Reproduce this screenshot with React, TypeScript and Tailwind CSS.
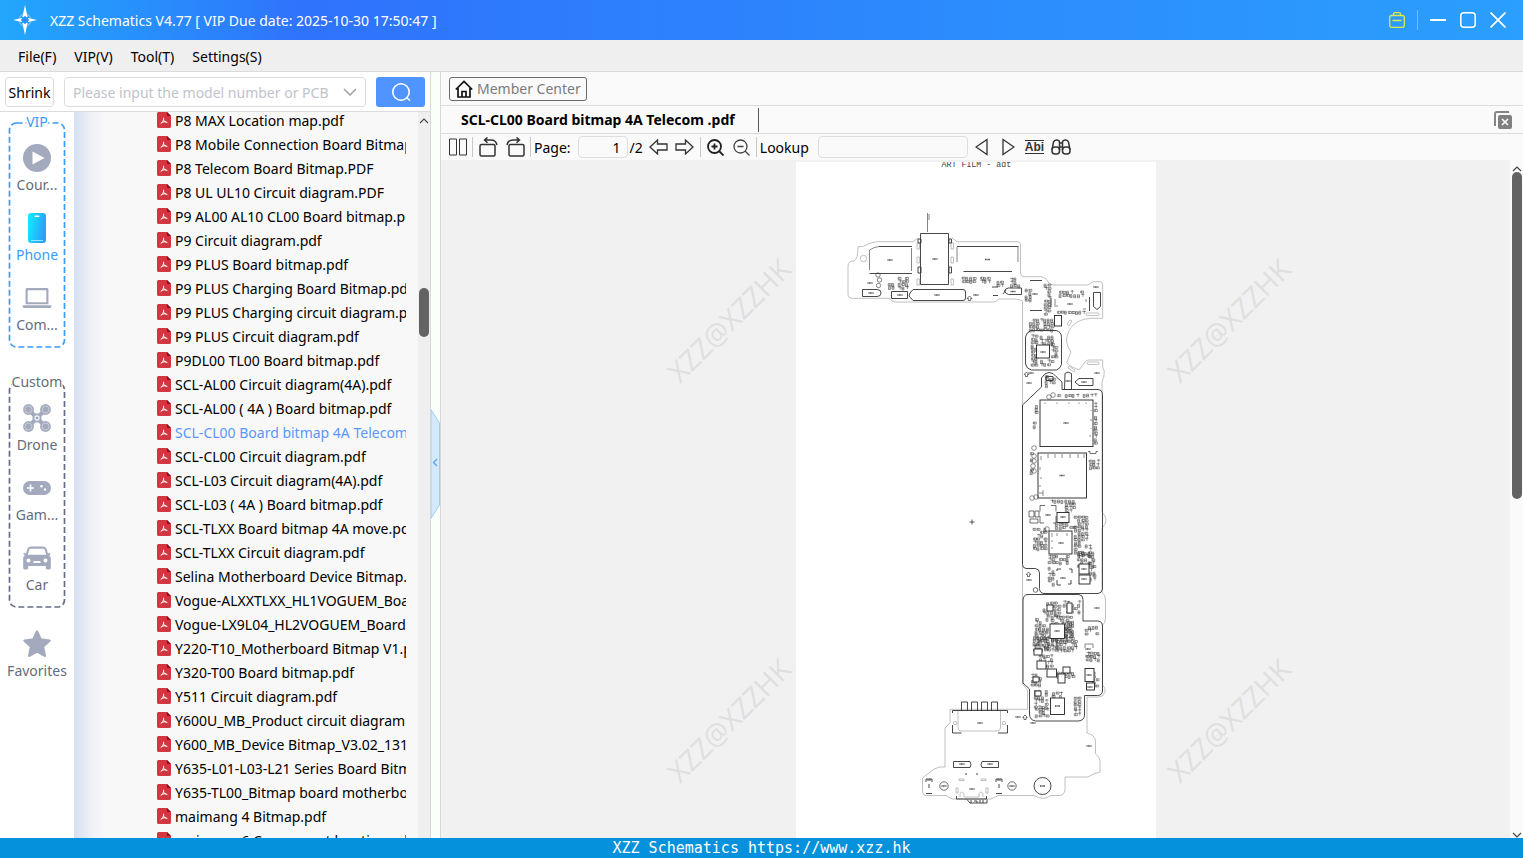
import { useState } from 'react';
import type { ReactNode } from 'react';

const FILES = [
  'P8 MAX Location map.pdf',
  'P8 Mobile Connection Board Bitmap.pdf',
  'P8 Telecom Board Bitmap.PDF',
  'P8 UL UL10 Circuit diagram.PDF',
  'P9 AL00 AL10 CL00 Board bitmap.pdf',
  'P9 Circuit diagram.pdf',
  'P9 PLUS Board bitmap.pdf',
  'P9 PLUS Charging Board Bitmap.pdf',
  'P9 PLUS Charging circuit diagram.pdf',
  'P9 PLUS Circuit diagram.pdf',
  'P9DL00 TL00 Board bitmap.pdf',
  'SCL-AL00 Circuit diagram(4A).pdf',
  'SCL-AL00 ( 4A ) Board bitmap.pdf',
  'SCL-CL00 Board bitmap 4A Telecom .pdf',
  'SCL-CL00 Circuit diagram.pdf',
  'SCL-L03 Circuit diagram(4A).pdf',
  'SCL-L03 ( 4A ) Board bitmap.pdf',
  'SCL-TLXX Board bitmap 4A move.pdf',
  'SCL-TLXX Circuit diagram.pdf',
  'Selina Motherboard Device Bitmap.pdf',
  'Vogue-ALXXTLXX_HL1VOGUEM_Board.pdf',
  'Vogue-LX9L04_HL2VOGUEM_Board.pdf',
  'Y220-T10_Motherboard Bitmap V1.pdf',
  'Y320-T00 Board bitmap.pdf',
  'Y511 Circuit diagram.pdf',
  'Y600U_MB_Product circuit diagram.pdf',
  'Y600_MB_Device Bitmap_V3.02_131.pdf',
  'Y635-L01-L03-L21 Series Board Bitmap.pdf',
  'Y635-TL00_Bitmap board motherboard.pdf',
  'maimang 4 Bitmap.pdf',
  'maimang 6 Component location.pdf',
];

const MENUS = ['File(F)', 'VIP(V)', 'Tool(T)', 'Settings(S)'];

function PdfIcon() {
  return (
    <svg width="14" height="16" viewBox="0 0 14 16" className="shrink-0">
      <path d="M1.500 0H10l4 4v10.500a1.500 1.500 0 0 1-1.500 1.500h-11A1.500 1.500 0 0 1 0 14.500v-13A1.500 1.500 0 0 1 1.500 0Z" fill="#d2363f" />
      <path d="M10 0v4h4Z" fill="#8c1219" />
      <path d="M6.600 6.200c.2 1.800-.6 3.800-2.600 5.200M6.600 7.500c.4 1.500 1.500 2.700 3.400 3M4.800 10.500c1.300-.8 2.900-1 4.200-.6" fill="none" stroke="#fff" strokeLinecap="round" />
    </svg>
  );
}

function CourseIcon() {
  return (
    <svg width="28" height="28" viewBox="0 0 28 28">
      <circle cx="14" cy="14" r="14" fill="#a3aabd" />
      <path d="M9.500 7.500v13l12-6.500Z" fill="#fff" />
    </svg>
  );
}

function PhoneIcon() {
  return (
    <svg width="18" height="30" viewBox="0 0 18 30">
      <defs>
        <linearGradient id="phone" x1="0" y1="0" x2="1" y2="0.3">
          <stop offset="0" stopColor="#0ff0fd" />
          <stop offset="1" stopColor="#2ba0fb" />
        </linearGradient>
      </defs>
      <rect width="18" height="30" rx="3" fill="url(#phone)" />
      <rect x="6.500" y="2.500" width="5" height="1.500" rx=".7" fill="#fff" />
      <path d="M3 27.500h12" stroke="#9be6fd" />
    </svg>
  );
}

function LaptopIcon() {
  return (
    <svg width="30" height="20" viewBox="0 0 30 21" fill="#a3aabd">
      <path fillRule="evenodd" d="M4.500 0h21A1.500 1.500 0 0 1 27 1.500V17H3V1.500A1.500 1.500 0 0 1 4.500 0ZM5.200 2.400V15h19.600V2.400Z" />
      <path d="M0 18h30v1.500a1.500 1.500 0 0 1-1.500 1.500h-27A1.500 1.500 0 0 1 0 19.500Z" />
    </svg>
  );
}

function DroneIcon() {
  return (
    <svg width="28" height="28" viewBox="0 0 28 28">
      <path d="M5.500 5.500 14 14l8.500-8.500M5.500 22.500 14 14l8.500 8.500" stroke="#a3aabd" strokeWidth="4" fill="none" />
      {[[5.5, 5.5], [22.5, 5.5], [5.5, 22.5], [22.5, 22.5]].map(([x, y]) => (
        <g key={`${x}-${y}`}>
          <circle cx={x} cy={y} r="5.400" fill="#a3aabd" />
          <circle cx={x} cy={y} r="3.500" fill="none" stroke="#d2d6df" strokeWidth=".8" />
        </g>
      ))}
      <circle cx="14" cy="14" r="4.600" fill="#a3aabd" />
      <circle cx="14" cy="14" r="2.100" fill="none" stroke="#fff" strokeWidth="1.100" />
    </svg>
  );
}

function GameIcon() {
  return (
    <svg width="28" height="14" viewBox="0 0 28 14">
      <rect width="28" height="14" rx="7" fill="#a3aabd" />
      <path d="M7.500 3.500v7M4 7h7" stroke="#fff" strokeWidth="1.600" />
      <circle cx="18.500" cy="5.200" r="1.200" fill="#fff" />
      <circle cx="22" cy="8.500" r="1.200" fill="#fff" />
    </svg>
  );
}

function CarIcon() {
  return (
    <svg width="28" height="24" viewBox="0 0 28 24">
      <path
        fillRule="evenodd"
        fill="#a3aabd"
        d="M8 .5h12c1.800 0 3 .9 3.600 2.500L25 7.500l1.700-.5c.9-.2 1.300 1 .5 1.500l-1 .7c1.100.8 1.600 1.800 1.600 3.300v9.200c0 1-.8 1.800-1.800 1.800h-1.400c-1 0-1.800-.8-1.800-1.800V20H5.200v1.700c0 1-.8 1.800-1.800 1.800H2C1 23.500.2 22.700.2 21.700v-9.200c0-1.500.5-2.500 1.600-3.300l-1-.7C0 8 .4 6.800 1.300 7L3 7.500 4.400 3C5 1.400 6.200.5 8 .5ZM7.800 2.700c-.8 0-1.200.3-1.500 1.100L4.800 8.700h18.400l-1.500-4.900c-.3-.8-.7-1.100-1.500-1.100ZM5.500 12.500a2 2 0 1 0 0 4 2 2 0 0 0 0-4Zm17 0a2 2 0 1 0 0 4 2 2 0 0 0 0-4ZM10.500 15v2h7v-2Z"
      />
    </svg>
  );
}

function StarIcon() {
  return (
    <svg width="28" height="28" viewBox="0 0 28 28">
      <path
        d="m14 1.500 3.700 8 8.800 1.100-6.500 6 1.800 9.200L14 21.500l-7.800 4.300L8 16.600l-6.500-6 8.800-1.100Z"
        fill="#a3aabd"
        stroke="#a3aabd"
        strokeWidth="2.400"
        strokeLinejoin="round"
      />
    </svg>
  );
}

interface SideItemProps {
  icon: ReactNode;
  label: string;
  active?: boolean;
}

function SideItem({ icon, label, active }: SideItemProps) {
  return (
    <button className="flex h-[70px] w-full flex-col items-center gap-px pt-2">
      <span className="flex h-7 items-center justify-center">{icon}</span>
      <span className={`text-[14px] leading-6 ${active ? 'text-[#3a9bfa]' : 'text-[#666c7b]'}`}>{label}</span>
    </button>
  );
}

interface GroupProps {
  title: string;
  color: string;
  textClass: string;
  children: ReactNode;
}

function SideGroup({ title, color, textClass, children }: GroupProps) {
  return (
    <section className="relative mx-auto w-14 pt-3.5">
      <svg className="absolute inset-0 h-full w-full overflow-visible" fill="none">
        <rect x=".5" y="1" width="55" height="224" rx="7" stroke={color} strokeWidth="1.700" strokeDasharray="6 3" />
      </svg>
      <h2 className={`absolute -top-2.5 left-1/2 -translate-x-1/2 bg-white text-[14px] leading-5 ${textClass}`}>{title}</h2>
      <div className="relative">{children}</div>
    </section>
  );
}

// x, y, width, height, seed
const CLUSTERS: number[][] = [
  [887, 283, 7, 7, 1], [897, 277, 9, 13, 51], [961, 277, 14, 5, 2], [979, 277, 10, 6, 3], [992, 281, 9, 6, 4],
  [1009, 278, 10, 9, 5], [1024, 289, 5, 12, 6], [1043, 284, 5, 30, 7], [1058, 291, 26, 7, 8],
  [1056, 311, 28, 3, 9], [1028, 319, 26, 12, 10], [1030, 335, 8, 30, 11], [1039, 336, 15, 8, 12],
  [1039, 360, 15, 5, 13], [1050, 343, 6, 16, 14], [1044, 375, 11, 12, 15], [1053, 394, 42, 4, 16],
  [1093, 403, 4, 10, 17], [1093, 416, 4, 29, 18], [1034, 405, 3, 10, 19], [1032, 422, 3, 9, 20],
  [1088, 460, 9, 10, 21], [1029, 446, 3, 30, 22], [1049, 500, 26, 3, 23], [1064, 503, 11, 8, 24],
  [1054, 523, 20, 6, 25], [1073, 516, 15, 14, 26], [1032, 528, 13, 22, 27], [1073, 532, 17, 24, 28],
  [1047, 555, 22, 9, 29], [1076, 552, 18, 14, 30], [1047, 567, 7, 18, 31], [1088, 562, 7, 20, 32],
  [1034, 618, 14, 30, 33], [1042, 602, 18, 14, 34], [1062, 601, 16, 12, 35], [1050, 616, 22, 24, 36],
  [1032, 636, 26, 16, 37], [1055, 640, 20, 12, 38], [1038, 655, 14, 12, 39], [1063, 621, 11, 20, 40],
  [1030, 674, 10, 13, 41], [1033, 690, 12, 20, 42], [1051, 692, 11, 6, 43], [1034, 708, 13, 9, 44],
  [1073, 697, 6, 18, 45], [1080, 626, 16, 9, 46], [1085, 652, 12, 9, 47], [1056, 672, 16, 7, 48],
  [1091, 672, 6, 14, 50],
];

function clusterPath([x, y, w, h, seed]: number[]) {
  let s = seed * 9301 + 49297;
  const rnd = () => {
    s = (s * 9301 + 49297) % 233280;
    return s / 233280;
  };
  let d = '';
  for (let cy = y; cy < y + h - 1; cy += 3.2) {
    for (let cx = x; cx < x + w - 1; cx += 3.6) {
      const r = rnd();
      if (r < 0.2) continue;
      const px = cx + rnd() * 0.6;
      const py = cy + rnd() * 0.6;
      d += r < 0.55
        ? `M${px} ${py}h3v2h-3zM${px + 1} ${py}v2`
        : r < 0.85
          ? `M${px} ${py}v3h2v-3zM${px} ${py + 1.5}h2`
          : `M${px} ${py}h3.500M${px + 2} ${py - 1}v3.500`;
    }
  }
  return d;
}

// x, y, width, height of the larger chips
const CHIPS = [
  [1039, 400, 53, 46.500], [1037, 453, 48.500, 45], [1048, 531, 23, 23], [1035.5, 345, 13, 13],
  [1049, 624, 14.500, 14.500], [1049.5, 698, 14, 16.500], [1084, 668.500, 9, 13], [1085.5, 683, 8, 7],
  [1033, 649, 8, 6], [1036, 661, 9, 8], [1046, 669, 9.500, 8], [1062, 667, 7, 6], [1057, 674, 7, 9],
  [1056, 512.500, 12, 10], [1078, 564, 10, 10], [1078, 575, 11, 9], [1053.5, 315.500, 7, 10.500],
  [1046, 605, 6, 6], [1066, 603, 5, 10], [1034, 691, 6, 5], [1032, 677, 6, 5],
];

const LABELS = [
  [889, 260], [934, 259], [986.5, 259.500], [936, 295], [870, 293], [899, 295], [1012, 291.500],
  [1034, 294], [1069, 304], [1095, 287], [975, 295], [869, 283], [1042, 352], [1030, 373], [1028, 383],
  [1067, 381], [1083, 382], [1096, 373], [1065, 423], [1061, 475.500], [1047, 515], [1062, 517],
  [1060, 543], [1062, 578], [1083, 569], [1083, 579], [1096, 608], [1056, 631], [1056.500, 706],
  [1088, 675], [1089, 687], [1087, 649], [1017, 717], [1032, 723], [1088, 746], [979, 723],
  [961, 764], [989, 764], [971, 789], [943, 786], [1011, 786], [1041.5, 786], [1028, 580],
];

function BoardDrawing() {
  return (
    <svg viewBox="795 162 360 676" className="block w-full" fill="none">
      <text x="940.500" y="167" fontFamily="Liberation Mono" fontSize="8.300" fill="#444">ART FILM - adt</text>
      {/* board outline */}
      <g stroke="#b0b0b0" strokeWidth=".8">
        <path d="M951 238L956 241.700H1017Q1019.500 242 1019.500 245V273Q1020 276.700 1023 276.700H1041Q1046 278 1047 282Q1049 285 1053 285H1087L1092 281.700H1099Q1101.700 282 1101.700 285V318.300H1090Q1067 320 1065.500 341Q1066 346 1070 352L1065.500 363Q1070 367 1078 370L1084 362Q1085 360 1088 360H1101.700V367Q1104 370 1103 376L1101 382V512Q1105 516 1105 520Q1105 525 1101 528V592Q1104.500 595 1104.500 600V618Q1104 624 1101.500 625V685Q1105 688 1104 692Q1102 697 1098 697H1086V733Q1094 735 1094.500 741V754Q1099 757 1099 761V772Q1093 773 1087 777H1064V790Q1063 795.500 1058 795.500H1050Q1042 801 1033 795.500H997L990 799H951L945 795.500H924Q921.500 795 921.500 791V778L933 769Q939 766 944 767V728L949 723V709.300H1026.500V690L1021.500 684V301Q1018 299 1014 299H998Q995 302 992 302H895Q890 302 889 298.300H851Q847 298 847 295V266Q847 261 853 261Q857 259 857 247Q863 247 867 244Q872 242 877 241.700H912L917 238" />
        <circle cx="862.500" cy="258.500" r="3.200" />
        <path d="M916 243h2.500v6h-2.500zM916 257h2.500v6h-2.500zM916 279h2.500v6h-2.500zM950 243h2.500v6h-2.500zM950 257h2.500v6h-2.500zM950 279h2.500v6h-2.500z" />
        <rect x="1085" y="313" width="13" height="2.500" rx="1.200" />
        <rect x="1086" y="362" width="12" height="2.500" rx="1.200" />
        <path d="m1066 324 3-4 2 1-3 5zM1068 366l6 4-1 2-6-4z" />
        <path d="M957 711V728Q957 731 960 731H996Q999 731 999.500 728V711M958 779h5v1.500h-5zM980 779h5v1.500h-5zM955 788h2v5h-2zM985 788h2v5h-2zM959 797v-3q1.500-4 4 0v3h15v-3q2-4 4 0v3" />
        <circle cx="954" cy="723" r="1.700" />
        <circle cx="1003" cy="723" r="1.700" />
      </g>
      {/* small parts */}
      <g stroke="#333" strokeWidth=".5">
        {CLUSTERS.map((c) => (
          <path key={c[4]} d={clusterPath(c)} />
        ))}
      </g>
      {/* shields and connectors */}
      <g stroke="#333" strokeWidth=".9">
        <path d="M926.500 213v19M928 214v6M868.500 270V250Q873 247 878 246.500M910.500 248v23M956 247v15M1017 247v15" strokeWidth=".6" />
        <path d="M878 246.500H911M868.500 273.500H911M956 246.500H1017.500M962.500 271.500H1011" />
        <path d="M919.500 233.500h28v51h-28zM917 239h3v4h-3zM948 239h2.500v4H948zM917 267h3v6h-3zM948 267h2.500v6H948z" />
        <path d="M861.500 289.500H876q4 0 4 3.500t-4 3.500H861.500ZM890.500 291.500h16v7h-16zM912 289.500h50q2.500 0 2.500 2.500v6q0 2.500-2.500 2.500h-50l-4-4.500 1-3ZM1020.500 288v6.500h-13q-3-1-4-3.500 1-3 4-3Z" />
        <circle cx="877" cy="275" r="2.200" strokeWidth=".6" />
        <circle cx="878.500" cy="280" r="2.200" strokeWidth=".6" />
        <circle cx="877.500" cy="285.500" r="2.200" strokeWidth=".6" />
        <path d="m968.500 296 2.500 2.500h-1.300v2h-2.400v-2H966ZM1025.500 372l2.300 2.500h-1.200v2h-2.200v-2h-1.200ZM1027.500 572l2.300 2.500h-1.200v2h-2.200v-2h-1.200ZM1024 715l2.300 2.500h-1.200v2h-2.200v-2h-1.200Z" strokeWidth=".7" />
        <path d="M991 287h6M992 295.500h5M1002 294l3-4M1029 280.500h12M1029 310.500h12M1088.500 297v14M1050 298v9" />
        <path d="M1092.500 292.500h7v14l-3.500 3-3.500-3Z" />
        <path d="M1054 299v8M1085 299v3M1055 306h2M1082 309h3" strokeWidth=".6" />
        <path d="M1030 330.500h25q5.500 1 5.500 7v27q-1 4-5 5.500h-25q-5-1-6-6v-27q1-5 5.500-6.500Z" />
        <path d="M1040.500 378q3-5.500 7.500-5.500t7 4L1061 382v7.500h36q4.500.5 4.500 5V589q-.5 4-4.500 4.500H1043q-4.500-.5-4.500-5V573q0-4-4-4.500H1025q-3.500-.5-3.500-4V405L1040.500 387Z" />
        <path d="M1064 373.500l3-1.500 3.500 1.500v16h-7zM1074 382l4-3.500h14v7h-14Z" />
        <path d="M1045 376.500h7v4h-7z" />
        <path d="M1026 594.500h52q4 .5 4 5V621h15q4.500.5 4.500 5v65q-.5 4.500-5 4.500h-13v20q-.5 5-6 5.500h-43q-6-1-6-7v-25l-6.500-6V600q.5-5 4-5.500Z" />
        <circle cx="1034.500" cy="590" r="2.300" strokeWidth=".7" />
        <path d="M1044 505.500h-5v6M1050 505.500h5v6M1039 516v7h4M1055 516v7h-3M1028 511h5v6h-5zM1034 511h4v6h-4zM1029 519h8v4h-8z" strokeWidth=".7" />
        <path d="M1056 571v-2h4M1068 569h3v4M1056 580v5h4M1067 584h3v-4" />
        <path d="M1084 644h8M1084 644v4M1092 644v4M1084 656h8" strokeWidth=".6" />
        <path d="M1087 451.500h2v2h6v-2h2" strokeWidth=".7" />
      </g>
      {/* chips */}
      <g stroke="#222" strokeWidth=".9" fill="#fff">
        {CHIPS.map(([x, y, w, h]) => (
          <rect key={`${x}-${y}`} x={x} y={y} width={w} height={h} />
        ))}
      </g>
      <g stroke="#444" strokeWidth=".6">
        {[[1033, 448], [1033, 456], [1033, 461], [1032, 466], [1033, 471], [1031, 498], [1035, 497], [1048, 397], [1052, 395], [1046, 529]].map(([x, y]) => (
          <circle key={`${x}-${y}`} cx={x} cy={y} r="2.300" />
        ))}
        <path d="M1044 402.500v1.500M1056 402.500v1.500M1068 402.500v1.500M1078 402.500v1.500M1085 402.500v1.500M1090 410v1M1090 419v2M1090 428v1M1088 436h2M1047 454v4M1054 454v4M1061 454v4M1069 454v4M1077 454v4M1083 454v4M1040 456v4M1039 467v3M1040 477v2M1039 485v2M1042 490v6M1038 493h4M1051 533v4M1056 533v3M1066 533v3M1050 541h2M1050 548h2" />
      </g>
      <path d={LABELS.map(([x, y]) => `M${x - 2.5} ${y}h5`).join('')} stroke="#444" strokeWidth="1.300" strokeDasharray="1 .4" />
      {/* charging port side */}
      <g stroke="#333" strokeWidth=".9">
        <path d="M960.500 711v-9h6v9M970.500 711v-9h6v9M980.500 711v-9h6v9M990.500 711v-9h6v9M951.500 713v-2.500h55V713M951.500 725v8h9M1006.500 725v8h-9.500" />
        <path d="M952.500 761.500H969l1 3-1 3H952.500ZM981 761.500h16.500v6H981l-1-3Z" />
        <path d="M925 782v-3h6v3M926 780h4M925 793.500h6M995 782v-3h6v3M996 780h4M995 793.500h6M928 784v4M998 784v4" />
        <circle cx="943" cy="786" r="4.200" strokeWidth=".7" />
        <circle cx="1011" cy="786" r="4.200" strokeWidth=".7" />
        <circle cx="1041.500" cy="786" r="8.500" />
        <path d="M955.500 796v3h30v-3M966 799.500l3 3.500h17v-3.500M970 800v3M973 801h3v2M979 800v3M982 800v3M965 773v2M976 773v2" />
        <path d="M968.500 522h5M971 519.500v5" strokeWidth=".8" />
      </g>
    </svg>
  );
}

function Watermarks() {
  return (
    <div className="mx-[3px] flex flex-col gap-[272px]">
      {[0, 1].map((n) => (
        <div key={n} className="flex h-32 w-32 items-center justify-center">
          <span className="-rotate-45 font-['Open_Sans',sans-serif] text-[28px] leading-8 text-[#dfdfdf]">XZZ@XZZHK</span>
        </div>
      ))}
    </div>
  );
}

function Divider() {
  return <span className="h-5 w-px bg-[#c8c8c8]" />;
}

export default function App() {
  const [selected, setSelected] = useState('SCL-CL00 Board bitmap 4A Telecom .pdf');

  return (
    <div className="flex h-screen flex-col overflow-hidden bg-white font-['Noto_Sans','Noto_Sans_CJK_SC',sans-serif] text-[14px] text-black">
      <header className="flex h-10 shrink-0 items-center bg-linear-to-r from-[#22a7fb] via-[#2f72fc] via-20% to-[#2b9ffd] pr-[17px] pl-3 text-white">
        <svg width="26" height="30" viewBox="0 0 26 30" className="mr-3">
          <circle cx="13" cy="15" r="6" fill="none" stroke="#7bb8fd" strokeWidth="1.200" />
          <path d="m13 0 2.600 12H10.400ZM13 30l-2.600-12h5.200ZM1 15l9-2v4ZM25 15l-9-2v4Z" fill="#fff" />
          <path d="M13 11v8M9 15h8" stroke="#2f88fc" strokeWidth="1.400" />
        </svg>
        <h1>XZZ Schematics V4.77 [ VIP Due date: 2025-10-30 17:50:47 ]</h1>
        <div className="ml-auto flex items-center gap-3">
          <button aria-label="Toolbox">
            <svg width="16" height="16" viewBox="0 0 16 16" fill="none" stroke="#dfe84e" strokeWidth="1.300">
              <rect x=".7" y="3.500" width="14.600" height="11.800" rx="2" />
              <path d="M4.500 3.500V2Q4.500.7 6 .7h4Q11.500.7 11.500 2v1.500M3.500 8.500h9" />
            </svg>
          </button>
          <span className="h-5 w-px bg-[#6fbcfe]" />
          <button aria-label="Minimize">
            <svg width="16" height="16" viewBox="0 0 16 16"><path d="M0 8h16" stroke="#fff" strokeWidth="2" /></svg>
          </button>
          <button aria-label="Maximize" className="mx-0.5">
            <svg width="16" height="16" viewBox="0 0 16 16"><rect x=".8" y=".8" width="14.400" height="14.400" rx="3" fill="none" stroke="#fff" strokeWidth="1.500" /></svg>
          </button>
          <button aria-label="Close">
            <svg width="16" height="16" viewBox="0 0 16 16"><path d="m.5.5 15 15M15.500.5l-15 15" stroke="#fff" strokeWidth="1.700" /></svg>
          </button>
        </div>
      </header>

      <nav className="flex h-8 shrink-0 items-center gap-[18px] border-b border-[#dadada] bg-[#efefef] px-[18px] pt-0.5">
        {MENUS.map((m) => (
          <button key={m}>{m}</button>
        ))}
      </nav>

      <div className="flex min-h-0 flex-1">
        <div className="flex w-[431px] shrink-0 flex-col border-r border-[#d8d8d8]">
          <div className="flex h-10 shrink-0 items-center border-b border-[#dcdcdc] px-[5px]">
            <button className="h-[30px] w-[49px] rounded-sm border border-[#dcdcdc] pt-0.5">Shrink</button>
            <label className="ml-2.5 flex h-[30px] w-[302px] items-center rounded-sm border border-[#dcdcdc] px-2">
              <input
                aria-label="Model number"
                placeholder="Please input the model number or PCB"
                className="min-w-0 flex-1 pt-0.5 outline-none placeholder:text-[#bfc3cb]"
              />
              <svg width="14" height="8" viewBox="0 0 14 8" className="ml-1"><path d="m1 1 6 6 6-6" fill="none" stroke="#a0a0a8" strokeWidth="1.500" /></svg>
            </label>
            <button aria-label="Search" className="ml-2.5 flex h-[30px] w-[49px] items-center justify-center rounded-[3px] bg-[#5095ff]">
              <svg width="20" height="20" viewBox="0 0 20 20" fill="none" stroke="#fff" strokeWidth="1.600"><circle cx="10" cy="10" r="8.200" /><path d="m15.500 15.500 3.500 3" /></svg>
            </button>
          </div>

          <div className="flex min-h-0 flex-1">
            <aside className="flex w-[74px] shrink-0 flex-col overflow-hidden pt-2.5">
              <SideGroup title="VIP" color="#3a9bfa" textClass="text-[#3a9bfa]">
                <SideItem icon={<CourseIcon />} label="Cour..." />
                <SideItem icon={<PhoneIcon />} label="Phone" active />
                <SideItem icon={<LaptopIcon />} label="Com..." />
              </SideGroup>
              <div className="h-9 shrink-0" />
              <SideGroup title="Custom" color="#666c86" textClass="text-[#666c7b]">
                <SideItem icon={<DroneIcon />} label="Drone" />
                <SideItem icon={<GameIcon />} label="Gam..." />
                <SideItem icon={<CarIcon />} label="Car" />
              </SideGroup>
              <div className="mt-4">
                <SideItem icon={<StarIcon />} label="Favorites" />
              </div>
            </aside>

            <div className="flex min-w-0 flex-1 bg-[#f8f8f8]">
              <div className="w-8 shrink-0 bg-linear-to-r from-[#d5dff0] via-[#edf0f6] to-[#f8f8f8]" />
              <ul className="min-w-0 flex-1 overflow-hidden pr-3 pl-[51px]">
                {FILES.map((f, i) => (
                  <li key={f} className={i === 0 ? '-mt-1' : ''}>
                    <button
                      onClick={() => setSelected(f)}
                      className={`flex h-6 w-full items-center gap-1 overflow-hidden whitespace-nowrap ${f === selected ? 'text-[#5b97fb]' : 'text-black'}`}
                    >
                      <PdfIcon />
                      {f}
                    </button>
                  </li>
                ))}
              </ul>
              <div className="flex w-3 shrink-0 flex-col items-center bg-[#efefef] pt-1.5">
                <svg width="10" height="6" viewBox="0 0 10 6"><path d="m1 5 4-4 4 4" fill="none" stroke="#444" strokeWidth="1.100" /></svg>
                <div className="mt-[164px] h-[49px] w-2.5 rounded-full bg-[#636363]" />
              </div>
            </div>
          </div>
        </div>

        <div className="flex w-2.5 shrink-0 flex-col border-r border-[#d8d8d8] bg-[#f9fff9] pt-[337px]">
          <button aria-label="Collapse panel">
            <svg width="9" height="110" viewBox="0 0 9 110">
              <path d="M0 .5 8.500 14v82L0 109.500Z" fill="#d5e9fd" stroke="#9dcdf7" />
              <path d="m6 50-3.500 3.500L6 57" fill="none" stroke="#4aa5ee" strokeWidth="1.200" />
            </svg>
          </button>
        </div>

        <main className="flex min-w-0 flex-1 flex-col bg-[#fafafa]">
          <div className="flex h-[34px] shrink-0 items-center border-b border-[#dcdcdc] px-2">
            <button className="flex h-6 items-center gap-1 rounded-[3px] border border-[#6a6a6a] px-[5px] text-[#7c7c7c]">
              <svg width="18" height="18" viewBox="0 0 18 18" fill="none" stroke="#111" strokeWidth="1.700"><path d="m.8 9.500 8.200-8 8.200 8M3 8v9h12V8M7 17v-5.500h4V17" /></svg>
              Member Center
            </button>
          </div>

          <div className="flex h-7 shrink-0 items-center border-b border-[#dcdcdc] pr-[11px] pl-5">
            <h2 className="font-bold">{selected}</h2>
            <span className="ml-[23px] h-6 w-px bg-[#555]" />
            <button aria-label="Close all" className="ml-auto">
              <svg width="18" height="18" viewBox="0 0 18 18">
                <path d="M1 15V3q0-2 2-2h12" fill="none" stroke="#858585" strokeWidth="2" />
                <rect x="4" y="4" width="14" height="14" rx="2" fill="#808080" />
                <path d="m8 8 6 6M14 8l-6 6" stroke="#fff" strokeWidth="1.700" />
              </svg>
            </button>
          </div>

          <div className="flex h-[26px] shrink-0 items-center px-[7px]">
            <button aria-label="Two pages">
              <svg width="20" height="18" viewBox="0 0 20 18" fill="none" stroke="#333"><path d="M1.500 1h7v16h-7zM11.500 1h7v16h-7z" /></svg>
            </button>
            <span className="mr-1.5 ml-1 flex"><Divider /></span>
            <button aria-label="Rotate left" className="mr-2">
              <svg width="19" height="20" viewBox="0 0 19 20" fill="none" stroke="#333" strokeWidth="1.500"><rect x="1" y="7.500" width="15" height="11.500" rx="1.500" /><path d="M5.500 3H12q5 0 6 5M8.500.5 5.500 3l3 2.800" /></svg>
            </button>
            <button aria-label="Rotate right">
              <svg width="19" height="20" viewBox="0 0 19 20" fill="none" stroke="#333" strokeWidth="1.500"><rect x="3" y="7.500" width="15" height="11.500" rx="1.500" /><path d="M13.500 3H7Q2 3 1 8M10.500.5l3 2.500-3 2.800" /></svg>
            </button>
            <span className="mr-[3px] ml-[5px] flex"><Divider /></span>
            <label className="flex items-center gap-[7px]">
              Page:
              <input defaultValue="1" className="h-[22px] w-[50px] rounded-sm border border-[#dedede] px-1.5 text-right outline-none" />
            </label>
            <span className="ml-0.5">/2</span>
            <button aria-label="Previous page" className="ml-1.5">
              <svg width="19" height="16" viewBox="0 0 19 16" fill="none" stroke="#333" strokeWidth="1.300"><path d="M1 8 8.500 1v4H18v6H8.500v4Z" /></svg>
            </button>
            <button aria-label="Next page" className="ml-[7px]">
              <svg width="19" height="16" viewBox="0 0 19 16" fill="none" stroke="#333" strokeWidth="1.300"><path d="m18 8-7.500-7v4H1v6h9.500v4Z" /></svg>
            </button>
            <span className="mr-1.5 ml-1.5 flex"><Divider /></span>
            <button aria-label="Zoom in">
              <svg width="17" height="17" viewBox="0 0 17 17" fill="none" stroke="#222" strokeWidth="1.800"><circle cx="7.500" cy="7.500" r="6.500" /><path d="m12 12 4.500 4.500M7.500 4.500v6M4.500 7.500h6" /></svg>
            </button>
            <button aria-label="Zoom out" className="ml-[9px]">
              <svg width="17" height="17" viewBox="0 0 17 17" fill="none" stroke="#444" strokeWidth="1.300"><circle cx="7.500" cy="7.500" r="6.500" /><path d="m12 12 4.500 4.500M4.500 7.500h6" /></svg>
            </button>
            <span className="mr-[3px] ml-1.5 flex"><Divider /></span>
            <label className="flex items-center gap-[9px]">
              Lookup
              <input className="h-[22px] w-[150px] rounded-sm border border-[#dedede] px-1.5 outline-none" />
            </label>
            <button aria-label="Find previous" className="ml-[7px]">
              <svg width="13" height="18" viewBox="0 0 13 18" fill="none" stroke="#333" strokeWidth="1.300"><path d="M12 1.500v15L1 9Z" /></svg>
            </button>
            <button aria-label="Find next" className="ml-3.5">
              <svg width="13" height="18" viewBox="0 0 13 18" fill="none" stroke="#333" strokeWidth="1.300"><path d="M1 1.500v15L12 9Z" /></svg>
            </button>
            <button className="ml-2.5 border-y border-[#333] font-['Liberation_Sans',sans-serif] text-[12px] leading-3 font-bold text-[#333]">Abi</button>
            <button aria-label="Find" className="ml-[7px]">
              <svg width="20" height="16" viewBox="0 0 20 16" fill="none" stroke="#333" strokeWidth="1.500"><rect x="1" y="8" width="7.500" height="7" rx="3" /><rect x="11.500" y="8" width="7.500" height="7" rx="3" /><path d="M1 11 2.500 3q1-2.500 3.500-2t2.500 2v8M19 11l-1.500-8q-1-2.500-3.500-2t-2.500 2v8M8.500 4h3M8.500 8h3" /></svg>
            </button>
          </div>

          <div className="flex min-h-0 flex-1">
            <div className="flex min-w-0 flex-1 overflow-hidden bg-[#f1f1f1] pt-0.5">
              <div className="flex flex-1 justify-end pt-[94px]"><Watermarks /></div>
              <div className="w-[360px] shrink-0 bg-white"><BoardDrawing /></div>
              <div className="flex flex-1 pt-[94px] pl-0"><div className="pl-1.5"><Watermarks /></div></div>
            </div>
            <div className="flex w-[13px] shrink-0 flex-col items-center bg-[#fafafa] pt-1.5">
              <svg width="10" height="6" viewBox="0 0 10 6"><path d="m1 5 4-4 4 4" fill="none" stroke="#444" strokeWidth="1.200" /></svg>
              <div className="h-[327px] w-2.5 rounded-full bg-[#636363]" />
              <svg width="10" height="6" viewBox="0 0 10 6" className="mt-auto"><path d="m1 1 4 4 4-4" fill="none" stroke="#444" strokeWidth="1.200" /></svg>
            </div>
          </div>
        </main>
      </div>

      <footer className="flex h-5 shrink-0 items-center justify-center bg-[#0591db] font-['DejaVu_Sans_Mono',monospace] text-[15px] leading-5 text-white">
        XZZ Schematics https://www.xzz.hk
      </footer>
    </div>
  );
}
